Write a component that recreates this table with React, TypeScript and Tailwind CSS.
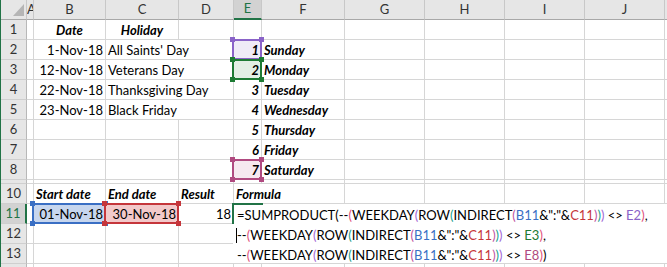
import React from "react";

const COLS = ["A", "B", "C", "D", "E", "F", "G", "H", "I", "J", "K"];

type Box = "purple" | "green" | "pink" | "blue" | "red";
type Align = "left" | "right" | "center";

type CellSpec = {
  text?: React.ReactNode;
  align?: Align;
  strong?: boolean;
  span?: number;
  box?: Box;
};

const boxStyles: Record<Box, { line: string; fill: string; handle: string }> = {
  purple: { line: "border-[#8a63c8]", fill: "bg-[#efebf7]", handle: "bg-[#8a63c8]" },
  green: { line: "border-[#1e7b34]", fill: "bg-[#e3efe5]", handle: "bg-[#1e7b34]" },
  pink: { line: "border-[#b04a80]", fill: "bg-[#f6e8ef]", handle: "bg-[#b04a80]" },
  blue: { line: "border-[#3a6fc4]", fill: "bg-[#c7d6ee]", handle: "bg-[#3a6fc4]" },
  red: { line: "border-[#c5363b]", fill: "bg-[#f2c9ca]", handle: "bg-[#c5363b]" },
};

const alignClass: Record<Align, string> = {
  left: "justify-start pl-[2px]",
  right: "justify-end pr-[2px]",
  center: "justify-center",
};

const grid = "border-r border-b border-[#d6d6d6]";
const headCell = "bg-[#e6e6e6] border-r border-b border-r-[#c8c8c8] border-b-[#a8a8a8] flex items-center justify-center text-[#333]";
const rowHead = "bg-[#e6e6e6] border-r border-b border-r-[#b8b8b8] border-b-[#cfcfcf] flex items-center justify-center text-[#333]";

const rows: { n: number; cells: Record<string, CellSpec> }[] = [
  { n: 1, cells: { B: { text: "Date", align: "center", strong: true }, C: { text: "Holiday", align: "center", strong: true } } },
  { n: 2, cells: { B: { text: "1-Nov-18", align: "right" }, C: { text: "All Saints' Day", span: 2 }, E: { text: "1", align: "right", strong: true, box: "purple" }, F: { text: "Sunday", strong: true } } },
  { n: 3, cells: { B: { text: "12-Nov-18", align: "right" }, C: { text: "Veterans Day", span: 2 }, E: { text: "2", align: "right", strong: true, box: "green" }, F: { text: "Monday", strong: true } } },
  { n: 4, cells: { B: { text: "22-Nov-18", align: "right" }, C: { text: "Thanksgiving Day", span: 2 }, E: { text: "3", align: "right", strong: true }, F: { text: "Tuesday", strong: true } } },
  { n: 5, cells: { B: { text: "23-Nov-18", align: "right" }, C: { text: "Black Friday", span: 2 }, E: { text: "4", align: "right", strong: true }, F: { text: "Wednesday", strong: true } } },
  { n: 6, cells: { E: { text: "5", align: "right", strong: true }, F: { text: "Thursday", strong: true } } },
  { n: 7, cells: { E: { text: "6", align: "right", strong: true }, F: { text: "Friday", strong: true } } },
  { n: 8, cells: { E: { text: "7", align: "right", strong: true, box: "pink" }, F: { text: "Saturday", strong: true } } },
];

const row10: Record<string, CellSpec> = {
  B: { text: "Start date", strong: true },
  C: { text: "End date", strong: true },
  D: { text: "Result", strong: true },
  E: { text: "Formula", strong: true, span: 2 },
};

const row11: Record<string, CellSpec> = {
  B: { text: "01-Nov-18", align: "right", box: "blue" },
  C: { text: "30-Nov-18", align: "right", box: "red" },
  D: { text: "18", align: "right" },
};

function RangeBox({ kind }: { kind: Box }) {
  const s = boxStyles[kind];
  const handle = `absolute size-[5px] ${s.handle}`;
  return (
    <div className={`absolute -left-[2px] -top-[1px] -right-[1px] -bottom-[1px] border-2 ${s.line} pointer-events-none`}>
      <span className={`${handle} -left-[4px] -top-[4px]`} />
      <span className={`${handle} -right-[4px] -top-[4px]`} />
      <span className={`${handle} -left-[4px] -bottom-[4px]`} />
      <span className={`${handle} -right-[4px] -bottom-[4px]`} />
    </div>
  );
}

function Cell({ spec }: { spec?: CellSpec }) {
  const span = spec?.span === 2 ? "col-span-2" : "";
  const align = alignClass[spec?.align ?? "left"];
  const fill = spec?.box ? `relative z-10 ${boxStyles[spec.box].fill}` : "";
  const weight = spec?.strong ? "font-bold italic" : "";
  return (
    <div className={`${grid} ${span} ${fill} flex items-end whitespace-nowrap overflow-visible ${align} ${weight}`}>
      <span className="leading-[18px]">{spec?.text}</span>
      {spec?.box && <RangeBox kind={spec.box} />}
    </div>
  );
}

function cellsFor(cells: Record<string, CellSpec>, upto = COLS.length) {
  const out: React.ReactNode[] = [];
  for (let i = 0; i < upto; i++) {
    const spec = cells[COLS[i]];
    out.push(<Cell key={COLS[i]} spec={spec} />);
    if (spec?.span === 2) i++;
  }
  return out;
}

// paren colours by nesting depth, then the range reference colours
const P2 = "text-[#e0507c]";
const P3 = "text-[#a266d4]";
const P4 = "text-[#16a08c]";
const P5 = "text-[#c0529f]";

function Weekday({ lastRef, refColor }: { lastRef: string; refColor: string }) {
  return (
    <>
      --<span className={P2}>(</span>WEEKDAY<span className={P3}>(</span>ROW<span className={P4}>(</span>INDIRECT
      <span className={P5}>(</span>
      <span className="text-[#3a6fc4]">B11</span>&amp;":"&amp;<span className="text-[#c5363b]">C11</span>
      <span className={P5}>)</span>
      <span className={P4}>)</span>
      <span className={P3}>)</span> &lt;&gt; <span className={refColor}>{lastRef}</span>
      <span className={P2}>)</span>
    </>
  );
}

function FormulaEditor() {
  return (
    <div className="col-start-6 col-end-13 row-start-12 row-end-15 relative z-20 -ml-px bg-white border-b border-[#d6d6d6] pl-[4px] whitespace-nowrap">
      <span className="absolute -left-[1px] -top-[1px] w-[31px] h-[2px] bg-[#217346]" />
      <span className="absolute -left-[1px] -top-[1px] w-[2px] h-[21px] bg-[#217346]" />
      <div className="h-5 flex items-end">
        <span className="leading-[18px]">
          =SUMPRODUCT(<Weekday lastRef="E2" refColor="text-[#8a63c8]" />,
        </span>
      </div>
      <div className="h-5 flex items-end relative">
        <span className="absolute left-[-1px] top-[4px] w-px h-[15px] bg-black" />
        <span className="leading-[18px]">
          <Weekday lastRef="E3" refColor="text-[#1e7b34]" />,
        </span>
      </div>
      <div className="h-5 flex items-end">
        <span className="leading-[18px]">
          <Weekday lastRef="E8" refColor="text-[#b04a80]" />)
        </span>
      </div>
    </div>
  );
}

export default function App() {
  return (
    <div className="w-[667px] h-[267px] overflow-hidden bg-white border-l border-[#217346] font-['Lato',_sans-serif] text-[13px] text-black">
      <div className="grid grid-cols-[26px_7px_72px_73px_55px_28px_83px_80px_80px_80px_80px_80px] grid-rows-[20px_repeat(8,20px)_4px_repeat(5,20px)]">
        {/* column headers */}
        <div className={`${headCell} relative`}>
          <svg width="26" height="19" viewBox="0 0 26 19" className="absolute inset-0">
            <polygon points="12,16 23,16 23,4" fill="#b5b5b5" />
          </svg>
        </div>
        {COLS.map((c) => (
          <div
            key={c}
            className={
              c === "E"
                ? "bg-[#d2d2d2] border-r border-r-[#c8c8c8] border-b-2 border-b-[#217346] flex items-center justify-center text-[#217346]"
                : c === "A"
                  ? `${headCell} overflow-hidden !justify-start`
                  : headCell
            }
          >
            {c === "K" ? null : c}
          </div>
        ))}

        {rows.map((r) => (
          <React.Fragment key={r.n}>
            <div className={rowHead}>{r.n}</div>
            {cellsFor(r.cells)}
          </React.Fragment>
        ))}

        {/* hidden row 9 */}
        <div className={rowHead} />
        {cellsFor({})}

        <div className={rowHead}>10</div>
        {cellsFor(row10)}

        <div className="bg-[#d2d2d2] border-r-2 border-r-[#217346] border-b border-b-[#cfcfcf] flex items-center justify-center text-[#217346]">
          11
        </div>
        {cellsFor(row11, 4)}
        <FormulaEditor />

        <div className={rowHead}>12</div>
        {cellsFor({}, 4)}
        <div className={rowHead}>13</div>
        {cellsFor({}, 4)}

        {/* row 14 only peeks in at the bottom edge */}
        <div className={rowHead} />
        {cellsFor({})}
      </div>
    </div>
  );
}
